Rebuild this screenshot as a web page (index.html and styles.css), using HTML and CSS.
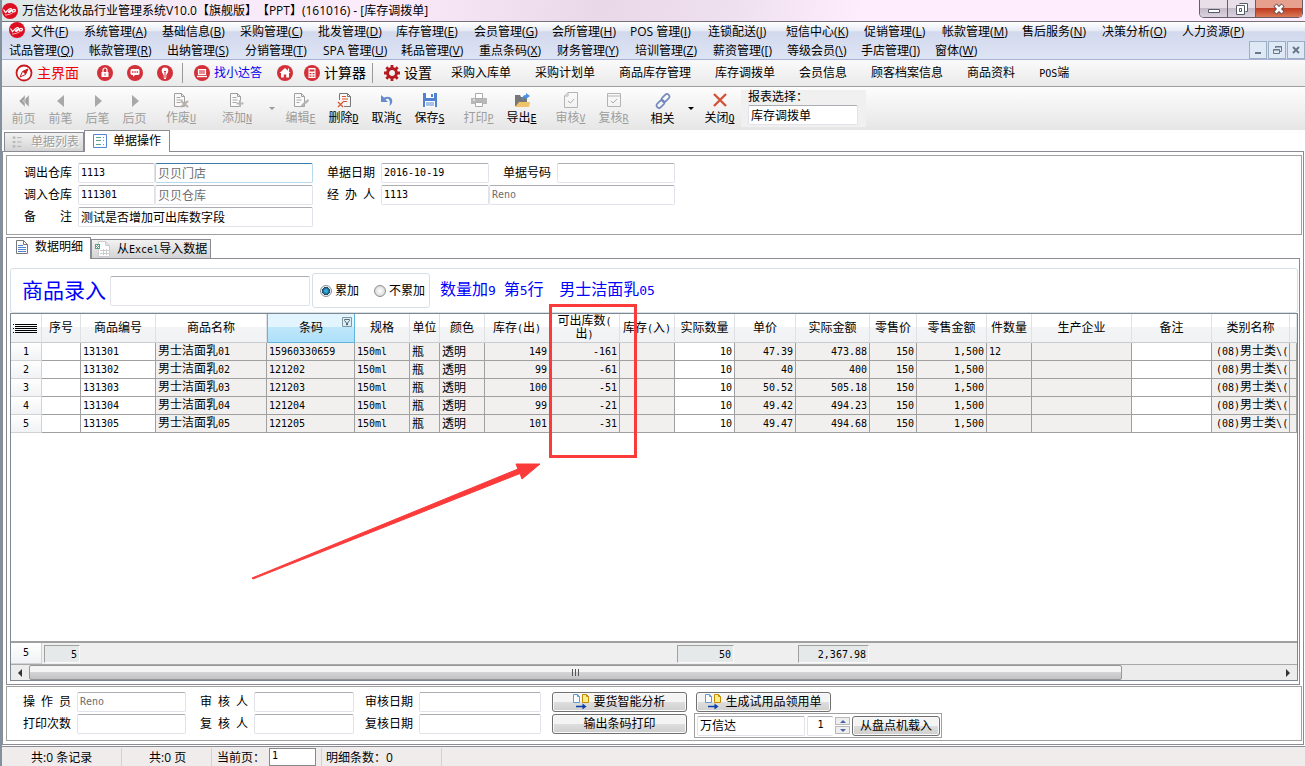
FILE: index.html
```html
<!DOCTYPE html>
<html lang="zh-CN">
<head>
<meta charset="utf-8">
<title>库存调拨单</title>
<link rel="stylesheet" href="styles.css">
</head>
<body>
<svg class="defs" aria-hidden="true">
  <symbol id="logo" viewBox="0 0 16 16"><circle cx="8" cy="8" r="8" fill="#dc1022"/><path d="M1.500 6.500l2 3L7 6.300c2-1.600 3.200-.3 1.800.8S5.500 9.200 7 9.300s3-3 5-3 2 2 .2 2.500-2-.5-1.600-1.500" fill="none" stroke="#fff" stroke-width="1.200"/><path d="M3 12c3 0 6-1 8-2.500" fill="none" stroke="#fff" stroke-width=".7"/></symbol>
  <symbol id="compass" viewBox="0 0 18 18"><circle cx="9" cy="9" r="7.500" fill="#fff" stroke="#c8191e" stroke-width="1.800"/><path d="M13 5l-2.500 5.500L5 13l2.500-5.500z" fill="none" stroke="#c8191e"/><path d="M13 5l-5.500 2.500 3 3z" fill="#c8191e"/></symbol>
  <symbol id="lock" viewBox="0 0 16 16"><circle cx="8" cy="8" r="8" fill="#d3303a"/><path d="M4.500 7h7v5h-7z" fill="#fff"/><path d="M6 7V5a2 2 0 0 1 4 0v2" fill="none" stroke="#fff" stroke-width="1.200"/><path d="M8 8.500v2" stroke="#d3303a"/></symbol>
  <symbol id="chat" viewBox="0 0 16 16"><circle cx="8" cy="8" r="8" fill="#d3303a"/><path d="M4.500 4h7l1 1v4l-1 1H8l-2 2v-2H4.500l-1-1V5z" fill="#fff"/><path d="M5 7h1.500M7.300 7h1.500M9.600 7h1.500" stroke="#d3303a" stroke-width="1.300"/></symbol>
  <symbol id="bulb" viewBox="0 0 16 16"><circle cx="8" cy="8" r="8" fill="#d3303a"/><path d="M8 2.500a3.300 3.300 0 0 1 3.300 3.300C11.300 8 9.700 8.500 9.500 10.500h-3C6.300 8.500 4.700 8 4.700 5.800A3.300 3.300 0 0 1 8 2.500z" fill="#fff"/><path d="M6.500 12h3M7 13.500h2" stroke="#fff"/><path d="M7 6l1 1 1-1M8 7v3" stroke="#d3303a" fill="none"/></symbol>
  <symbol id="laptop" viewBox="0 0 16 16"><circle cx="8" cy="8" r="8" fill="#d3303a"/><path d="M4.500 4.500h7v5h-7z" fill="#e88a8f" stroke="#fff" stroke-width="1.200"/><path d="M3 11.500h10" stroke="#fff" stroke-width="1.400"/></symbol>
  <symbol id="home" viewBox="0 0 16 16"><circle cx="8" cy="8" r="8" fill="#d3303a"/><path d="M8 3l5.500 5H12v4.500H9.200V9.500H6.800v3H4V8H2.500z" fill="#fff"/><path d="M11.500 3.500v3" stroke="#fff" stroke-width="1.200"/></symbol>
  <symbol id="calc" viewBox="0 0 16 16"><circle cx="8" cy="8" r="8" fill="#d3303a"/><path d="M4.500 3h7v10h-7z" fill="#fff"/><path d="M5.500 4.500h5v2h-5zM5.500 8h2v1.300h-2zM8.500 8h2v1.300h-2zM5.500 10.500h2v1.300h-2zM8.500 10.500h2v1.300h-2z" fill="#d3303a"/></symbol>
  <symbol id="gear" viewBox="0 0 16 16"><circle cx="8" cy="8" r="4.500" fill="none" stroke="#b51a20" stroke-width="3"/><path d="M8 0v3M8 13v3M0 8h3M13 8h3M2.300 2.300l2.200 2.200M11.500 11.500l2.200 2.200M13.700 2.300l-2.200 2.200M4.500 11.500l-2.200 2.200" stroke="#b51a20" stroke-width="2.800"/></symbol>
  <symbol id="first" viewBox="0 0 16 16"><path d="M9 2v12L3 8zM13 2v12L7 8z" fill="#a2a2a2" stroke="#e8e8e8" stroke-width=".6"/></symbol>
  <symbol id="prev" viewBox="0 0 16 16"><path d="M11 2v12L4 8z" fill="#a8a8a8"/></symbol>
  <symbol id="next" viewBox="0 0 16 16"><path d="M5 2v12l7-6z" fill="#a8a8a8"/></symbol>
  <symbol id="void" viewBox="0 0 16 16"><path d="M1.500 1.500h7l3 3v10h-10zM8.500 1.500v3h3" fill="#fafafa" stroke="#a0a0a0"/><path d="M3.500 5.500h4M3.500 8h6M3.500 10.500h4" stroke="#a8a8a8"/><path d="M8 9l7 6M15 9l-7 6" stroke="#b8b0ac" stroke-width="2.200"/></symbol>
  <symbol id="add" viewBox="0 0 16 16"><path d="M1.500 1.500h7l3 3v10h-10zM8.500 1.500v3h3" fill="#fafafa" stroke="#a0a0a0"/><path d="M3.500 5.500h4M3.500 8h5M3.500 10.500h4" stroke="#a8a8a8"/><path d="M11 8v7M7.500 11.500h7" stroke="#b8b8b8" stroke-width="2"/></symbol>
  <symbol id="edit" viewBox="0 0 16 16"><path d="M1.500 1.500h7l3 3v10h-10zM8.500 1.500v3h3" fill="#fafafa" stroke="#a0a0a0"/><path d="M3.500 5.500h4M3.500 8h5M3.500 10.500h3" stroke="#a8a8a8"/><path d="M15 7l-6 5-2 3 3.500-1L16 9z" fill="#b4b4b8"/></symbol>
  <symbol id="del" viewBox="0 0 16 16"><path d="M3.500 8V1.500h8l3 3v10H8M11.500 1.500v3h3" fill="none" stroke="#777"/><path d="M6 4.500h4M6 7h6M7 9.500h4" stroke="#d8532f"/><path d="M2 10l5 5M7 10l-5 5" stroke="#d8532f" stroke-width="1.200"/></symbol>
  <symbol id="undo" viewBox="0 0 16 16"><path d="M2 3v7h7L6.500 7.500C9 5.500 12 7.500 10.500 14 16 10 13 2 5 5.500z" fill="#668ccc"/></symbol>
  <symbol id="save" viewBox="0 0 16 16"><path d="M1 1h14v14H1z" fill="#5182cf"/><path d="M4 1h8v5H4zM3 9h10v6H3z" fill="#fff"/><path d="M9 2h2v3H9z" fill="#5182cf"/><path d="M4 11h8M4 13h8" stroke="#5182cf"/></symbol>
  <symbol id="print" viewBox="0 0 16 16"><path d="M0 6h16v6H0z" fill="#b7b7b7"/><path d="M4.500 1.500h7v5h-7zM4.500 10.500h7v4h-7z" fill="#fff" stroke="#aaa"/><path d="M2 8h2" stroke="#fff"/></symbol>
  <symbol id="export" viewBox="0 0 16 16"><path d="M1 3h5l1 2h6v9H1z" fill="#777"/><path d="M5 10h11l-1 5H1z" fill="#eec36a"/><path d="M8 8c0-4 2-5 4-5V1l4 3-4 3V5.500C10 5.500 9 6 8 8z" fill="#4e93e6"/></symbol>
  <symbol id="audit" viewBox="0 0 16 16"><path d="M5 .5h9.500v15h-13V4zM5 .5V4H1.500" fill="none" stroke="#b4b4b4"/><path d="M5 9l2.500 2L11 7" fill="none" stroke="#aaa"/></symbol>
  <symbol id="recheck" viewBox="0 0 16 16"><path d="M1.500 1.500h13v13h-13zM1.500 4h13" fill="none" stroke="#b4b4b4"/><path d="M5 9l2 2 4-4" fill="none" stroke="#aaa"/></symbol>
  <symbol id="link" viewBox="0 0 16 16"><g fill="none" stroke="#7288bd" stroke-width="1.600"><rect x="6" y="2.500" width="9" height="5" rx="2.500" transform="rotate(-45 10.500 5)"/><rect x="1" y="8.500" width="9" height="5" rx="2.500" transform="rotate(-45 5.500 11)"/></g></symbol>
  <symbol id="close" viewBox="0 0 16 16"><path d="M2 2l12 12M14 2L2 14" stroke="#d15439" stroke-width="2.400"/></symbol>
  <symbol id="list" viewBox="0 0 16 16"><path d="M2 3h3M2 8h3M2 13h3" stroke="#b5b5b5" stroke-width="2.500"/><path d="M7 3h5M7 8h5M7 13h5" stroke="#a8a8a8"/></symbol>
  <symbol id="form" viewBox="0 0 14 14"><path d="M.5.500h13v13H.5z" fill="#fff" stroke="#5487d6"/><path d="M3 3.500h5M3 6.500h5M3 10.500h5M10 3.500h1M10 6.500h1M10 10.500h1" stroke="#5aa58b"/></symbol>
  <symbol id="doc" viewBox="0 0 14 14"><path d="M1.500.500h7l4 4v9h-11zM8.500.500v4h4" fill="#fff" stroke="#777"/><path d="M3 5.500h5M3 7.500h8M3 9.500h8M3 11.500h8" stroke="#5182cf"/></symbol>
  <symbol id="excel" viewBox="0 0 16 16"><path d="M3.500.500h7l4 4v11h-11zM10.500.500v4h4" fill="#fff" stroke="#ccc"/><path d="M0 3h5v5H0z" fill="#57a17f"/><path d="M1 4l3 3M4 4L1 7" stroke="#fff"/><path d="M5 9.500h9M5 12.500h9M8.500 8v6M11.500 8v6" stroke="#ccc"/></symbol>
  <symbol id="transfer" viewBox="0 0 16 16"><path d="M.5.500h4l2 2v6h-6zM4.500.500v2h2" fill="#fff" stroke="#609ad0"/><path d="M9.500.500h4l2 2v6h-6zM13.500.500v2h2" fill="#ffee8c" stroke="#c58a00"/><path d="M3 12.500h8" stroke="#0b3fa8" stroke-width="1.500"/><path d="M9.500 9.500l4 3-4 3z" fill="#0b3fa8"/></symbol>
</svg>

<header class="title">
  <svg class="i16"><use href="#logo"/></svg>
  <h1>万信达化妆品行业管理系统V10.0【旗舰版】【PPT】(161016) - [库存调拨单]</h1>
  <div class="wins">
    <button aria-label="最小化"><svg viewBox="0 0 14 12"><path d="M1.500 6.500h11v3h-11z" fill="#fff" stroke="#555a68"/></svg></button>
    <button aria-label="还原"><svg viewBox="0 0 14 12"><path d="M4.500.500h8v8h-2M1.500 2.500h8v9h-8zM4.500 5.500h2v3h-2z" fill="#fff" stroke="#555a68"/></svg></button>
    <button class="x" aria-label="关闭"><svg viewBox="0 0 14 12"><path d="M3 2l8 8M11 2l-8 8" stroke="#5c4a52" stroke-width="4.500"/><path d="M3.500 2.500l7 7M10.500 2.500l-7 7" stroke="#fff" stroke-width="2.600"/></svg></button>
  </div>
</header>

<nav class="menu">
  <div class="mrow top">
    <svg class="i16"><use href="#logo"/></svg>
    <a class="first" href="#">文件(<u>F</u>)</a><a href="#">系统管理(<u>A</u>)</a><a href="#">基础信息(<u>B</u>)</a><a href="#">采购管理(<u>C</u>)</a><a href="#">批发管理(<u>D</u>)</a><a href="#">库存管理(<u>E</u>)</a><a href="#">会员管理(<u>G</u>)</a><a href="#">会所管理(<u>H</u>)</a><a href="#">POS 管理(<u>I</u>)</a><a href="#">连锁配送(<u>J</u>)</a><a href="#">短信中心(<u>K</u>)</a><a href="#">促销管理(<u>L</u>)</a><a class="wide" href="#">帐款管理(<u>M</u>)</a><a class="wide" href="#">售后服务(<u>N</u>)</a><a class="wide" href="#">决策分析(<u>O</u>)</a><a class="wide" href="#">人力资源(<u>P</u>)</a>
  </div>
  <div class="mrow">
    <a class="wide" href="#">试品管理(<u>Q</u>)</a><a href="#">帐款管理(<u>R</u>)</a><a href="#">出纳管理(<u>S</u>)</a><a href="#">分销管理(<u>T</u>)</a><a href="#">SPA 管理(<u>U</u>)</a><a href="#">耗品管理(<u>V</u>)</a><a href="#">重点条码(<u>X</u>)</a><a href="#">财务管理(<u>Y</u>)</a><a href="#">培训管理(<u>Z</u>)</a><a class="slim" href="#">薪资管理(<u>[</u>)</a><a class="slim" href="#">等级会员(<u>\</u>)</a><a class="slim" href="#">手店管理(<u>]</u>)</a><a class="slim" href="#">窗体(<u>W</u>)</a>
    <div class="mdi">
      <button aria-label="最小化窗口"><svg viewBox="0 0 12 12"><path d="M3 9h6" stroke="#66788c" stroke-width="2"/></svg></button>
      <button aria-label="还原窗口"><svg viewBox="0 0 12 12"><path d="M4.500 4V2.500h6v5H9M4 3h7M2.500 5.500h6v4h-6zM2 6h7" fill="none" stroke="#66788c"/></svg></button>
      <button aria-label="关闭窗口"><svg viewBox="0 0 12 12"><path d="M3 3l6 6M9 3l-6 6" stroke="#66788c" stroke-width="2"/></svg></button>
    </div>
  </div>
</nav>

<div class="quick">
  <button class="big red"><svg class="i18"><use href="#compass"/></svg>主界面</button>
  <div class="icons">
    <button aria-label="锁定"><svg class="i16"><use href="#lock"/></svg></button>
    <button aria-label="消息"><svg class="i16"><use href="#chat"/></svg></button>
    <button aria-label="提示"><svg class="i16"><use href="#bulb"/></svg></button>
  </div>
  <i class="bar"></i>
  <button class="blue"><svg class="i16"><use href="#laptop"/></svg>找小达答</button>
  <button class="house" aria-label="主页"><svg class="i16"><use href="#home"/></svg></button>
  <button class="big"><svg class="i16"><use href="#calc"/></svg>计算器</button>
  <i class="bar tight"></i>
  <button class="big set"><svg class="i16"><use href="#gear"/></svg>设置</button>
  <div class="links"><a href="#">采购入库单</a><a href="#">采购计划单</a><a href="#">商品库存管理</a><a href="#">库存调拨单</a><a href="#">会员信息</a><a href="#">顾客档案信息</a><a href="#">商品资料</a><a href="#"><span class="m">POS</span>端</a></div>
</div>

<div class="tools">
  <button class="nav" disabled><svg class="i16"><use href="#first"/></svg>前页</button>
  <button class="nav" disabled><svg class="i16"><use href="#prev"/></svg>前笔</button>
  <button class="nav" disabled><svg class="i16"><use href="#next"/></svg>后笔</button>
  <button class="nav" disabled><svg class="i16"><use href="#next"/></svg>后页</button>
  <button class="roomy" disabled><svg class="i16"><use href="#void"/></svg><span>作废<u class="m">U</u></span></button>
  <button class="roomy" disabled><svg class="i16"><use href="#add"/></svg><span>添加<u class="m">N</u></span></button>
  <i class="caret off"></i>
  <button disabled><svg class="i16"><use href="#edit"/></svg><span>编辑<u class="m">E</u></span></button>
  <button><svg class="i16"><use href="#del"/></svg><span>删除<u class="m">D</u></span></button>
  <button><svg class="i16"><use href="#undo"/></svg><span>取消<u class="m">C</u></span></button>
  <button><svg class="i16"><use href="#save"/></svg><span>保存<u class="m">S</u></span></button>
  <button class="sep" disabled><svg class="i16"><use href="#print"/></svg><span>打印<u class="m">P</u></span></button>
  <button><svg class="i16"><use href="#export"/></svg><span>导出<u class="m">E</u></span></button>
  <button class="sep" disabled><svg class="i16"><use href="#audit"/></svg><span>审核<u class="m">V</u></span></button>
  <button disabled><svg class="i16"><use href="#recheck"/></svg><span>复核<u class="m">R</u></span></button>
  <button class="sep"><svg class="i16"><use href="#link"/></svg>相关</button>
  <i class="caret"></i>
  <button><svg class="i16"><use href="#close"/></svg><span>关闭<u class="m">Q</u></span></button>
  <div class="report"><label for="rep">报表选择：</label><input id="rep" value="库存调拨单"></div>
</div>

<div class="tabs main-tabs">
  <button class="tab dim"><svg class="i14"><use href="#list"/></svg>单据列表</button>
  <button class="tab on"><svg class="i14"><use href="#form"/></svg>单据操作</button>
</div>

<main class="frame">
  <section class="panel form">
    <div class="line">
      <label for="f1">调出仓库</label><input id="f1" class="num w78" value="1113"><input class="hot w158" value="贝贝门店" readonly aria-label="调出仓库名称">
      <label class="l2" for="f2">单据日期</label><input id="f2" class="num w108" value="2016-10-19">
      <label class="l2" for="f3">单据号码</label><input id="f3" class="w118">
    </div>
    <div class="line">
      <label for="f4">调入仓库</label><input id="f4" class="num w78" value="111301"><input class="w158" value="贝贝仓库" readonly aria-label="调入仓库名称">
      <label class="l2" for="f5">经&ensp;办&ensp;人</label><input id="f5" class="num w108" value="1113"><input class="num w186" value="Reno" readonly aria-label="经办人姓名">
    </div>
    <div class="line">
      <label for="f6">备　　注</label><input id="f6" class="w236" value="测试是否增加可出库数字段">
    </div>
  </section>

  <div class="tabs sub-tabs">
    <button class="tab on"><svg class="i14"><use href="#doc"/></svg>数据明细</button>
    <button class="tab"><svg class="i16"><use href="#excel"/></svg><span>从<span class="m">Excel</span>导入数据</span></button>
  </div>

  <section class="page">
    <div class="entry">
      <label class="huge" for="sku">商品录入</label><input id="sku">
      <div class="radios">
        <input type="radio" name="acc" id="r1" checked><label for="r1">累加</label>
        <input type="radio" name="acc" id="r2"><label for="r2">不累加</label>
      </div>
      <p class="msg">数量加<span>9 </span>第<span>5</span>行<span>&nbsp; </span>男士洁面乳<span>05</span></p>
    </div>

    <div class="grid">
      <table>
        <colgroup><col class="c31"><col class="c39"><col class="c75"><col class="c111"><col class="c88"><col class="c55"><col class="c30"><col class="c45"><col class="c65"><col class="c70"><col class="c55"><col class="c60"><col class="c61"><col class="c74"><col class="c47"><col class="c70"><col class="c45"><col class="c100"><col class="c80"><col class="c78"><col></colgroup>
        <thead><tr><th><svg class="rows" viewBox="0 0 26 10"><path d="M2 1.500h22M2 3.500h22M2 5.500h22M2 7.500h22M2 9.500h22M0 1.500h1M0 5.500h1M0 9.500h1" stroke="#000"/></svg></th><th>序号</th><th>商品编号</th><th>商品名称</th><th class="sel">条码<svg class="filter" viewBox="0 0 10 10"><path d="M.5.500h9v9h-9z" fill="#d9f0fb" stroke="#7e98a5"/><path d="M2.500 2.500h5v1L5.500 6v2h-1V6l-2-2.500z" fill="none" stroke="#666"/></svg></th><th>规格</th><th>单位</th><th>颜色</th><th>库存<span class="m">(</span>出<span class="m">)</span></th><th class="two">可出库数<span class="m">(</span><br>出<span class="m">)</span></th><th>库存<span class="m">(</span>入<span class="m">)</span></th><th>实际数量</th><th>单价</th><th>实际金额</th><th>零售价</th><th>零售金额</th><th>件数量</th><th>生产企业</th><th>备注</th><th>类别名称</th><th></th></tr></thead>
        <tbody>
          <tr><th>1</th><td class="w"></td><td class="w m">131301</td><td>男士洁面乳<span class="m">01</span></td><td class="m">15960330659</td><td class="m">150ml</td><td>瓶</td><td>透明</td><td class="n">149</td><td class="n">-161</td><td></td><td class="n w">10</td><td class="n">47.39</td><td class="n">473.88</td><td class="n">150</td><td class="n">1,500</td><td class="m">12</td><td></td><td class="w"></td><td class="cat"><span class="m">(08)</span>男士类<span class="m">\(</span></td><td></td></tr>
          <tr><th>2</th><td class="w"></td><td class="w m">131302</td><td>男士洁面乳<span class="m">02</span></td><td class="m">121202</td><td class="m">150ml</td><td>瓶</td><td>透明</td><td class="n">99</td><td class="n">-61</td><td></td><td class="n w">10</td><td class="n">40</td><td class="n">400</td><td class="n">150</td><td class="n">1,500</td><td></td><td></td><td class="w"></td><td class="cat"><span class="m">(08)</span>男士类<span class="m">\(</span></td><td></td></tr>
          <tr><th>3</th><td class="w"></td><td class="w m">131303</td><td>男士洁面乳<span class="m">03</span></td><td class="m">121203</td><td class="m">150ml</td><td>瓶</td><td>透明</td><td class="n">100</td><td class="n">-51</td><td></td><td class="n w">10</td><td class="n">50.52</td><td class="n">505.18</td><td class="n">150</td><td class="n">1,500</td><td></td><td></td><td class="w"></td><td class="cat"><span class="m">(08)</span>男士类<span class="m">\(</span></td><td></td></tr>
          <tr><th>4</th><td class="w"></td><td class="w m">131304</td><td>男士洁面乳<span class="m">04</span></td><td class="m">121204</td><td class="m">150ml</td><td>瓶</td><td>透明</td><td class="n">99</td><td class="n">-21</td><td></td><td class="n w">10</td><td class="n">49.42</td><td class="n">494.23</td><td class="n">150</td><td class="n">1,500</td><td></td><td></td><td class="w"></td><td class="cat"><span class="m">(08)</span>男士类<span class="m">\(</span></td><td></td></tr>
          <tr><th>5</th><td class="w"></td><td class="w m">131305</td><td>男士洁面乳<span class="m">05</span></td><td class="m">121205</td><td class="m">150ml</td><td>瓶</td><td>透明</td><td class="n">101</td><td class="n">-31</td><td></td><td class="n w">10</td><td class="n">49.47</td><td class="n">494.68</td><td class="n">150</td><td class="n">1,500</td><td></td><td></td><td class="w"></td><td class="cat"><span class="m">(08)</span>男士类<span class="m">\(</span></td><td></td></tr>
        </tbody>
      </table>
      <div class="blank"></div>
      <table class="sum">
        <colgroup><col class="c31"><col class="c39"><col class="c594"><col class="c60"><col class="c61"><col class="c74"><col></colgroup>
        <tbody><tr><th>5</th><td><div class="box">5</div></td><td></td><td><div class="box">50</div></td><td></td><td><div class="box">2,367.98</div></td><td></td></tr></tbody>
      </table>
      <div class="scroll"><button class="left" aria-label="向左滚动"></button><div class="track"><div class="thumb"><i></i><i></i><i></i></div></div><button class="right" aria-label="向右滚动"></button></div>
    </div>
  </section>

  <section class="panel foot">
    <div class="fields">
      <label for="g1">操&ensp;作&ensp;员</label><input id="g1" class="num" value="Reno" readonly>
      <label for="g2">审&ensp;核&ensp;人</label><input id="g2">
      <label for="g3">审核日期</label><input id="g3">
      <label for="g4">打印次数</label><input id="g4">
      <label for="g5">复&ensp;核&ensp;人</label><input id="g5">
      <label for="g6">复核日期</label><input id="g6">
    </div>
    <div class="acts">
      <button class="btn"><svg class="i16"><use href="#transfer"/></svg>要货智能分析</button>
      <button class="btn">输出条码打印</button>
    </div>
    <div class="acts">
      <button class="btn gen"><svg class="i16"><use href="#transfer"/></svg>生成试用品领用单</button>
      <div class="load"><input class="dev" value="万信达" aria-label="盘点机"><input class="num qty" value="1" aria-label="编号"><span class="spin"><button aria-label="增加"><i class="up"></i></button><button aria-label="减少"><i class="down"></i></button></span><button class="btn">从盘点机载入</button></div>
    </div>
  </section>
</main>

<footer class="status">
  <span class="s1">共:0 条记录</span><span class="s2">共:0 页</span><span class="s3"><label for="pg">当前页：</label><input id="pg" class="num" value="1"></span><span class="s4">明细条数：0</span>
</footer>

<svg class="note" viewBox="0 0 400 290" aria-hidden="true">
  <path d="M301.500 2.500h85v151h-85z" fill="none" stroke="#fb3a3a" stroke-width="3"/>
  <path d="M3 275L269 166l-2-5 24 0-18 15-2-5.500L4 276z" fill="#fb3a3a" stroke="#fb3a3a"/>
</svg>
</body>
</html>
```

FILE: styles.css
```css
* { box-sizing: border-box; }

body {
  margin: 0;
  min-height: 100vh;
  display: flex;
  flex-direction: column;
  position: relative;
  overflow: hidden;
  border-left: 2px solid #82919d;
  background: #fff;
  color: #000;
  font: 12px/16px "Liberation Sans", "Noto Sans CJK SC", sans-serif;
}

button, input { font: inherit; color: inherit; margin: 0; padding: 0; }
button { background: none; border: 0; white-space: nowrap; }
a { color: inherit; text-decoration: none; white-space: nowrap; }
svg { display: block; flex: none; }

.defs { position: absolute; width: 0; height: 0; }
.i14 { width: 14px; height: 14px; }
.i16 { width: 16px; height: 16px; }
.i18 { width: 18px; height: 18px; }
.m { font-family: "DejaVu Sans Mono", monospace; font-size: 10px; }

input {
  height: 20px;
  border: 1px solid #e2e3ea;
  border-top-color: #abadb3;
  border-radius: 2px;
  background: #fff;
  padding: 0 2px 2px;
  min-width: 0;
}
input[readonly] { color: #6d6d6d; }
input.num { font-family: "DejaVu Sans Mono", monospace; font-size: 10px; }
input.hot { border-color: #3d7bad #b7d9ed #b7d9ed; }

.title {
  display: flex;
  align-items: center;
  gap: 4px;
  height: 22px;
  border-bottom: 1px solid #777078;
  background: linear-gradient(100deg, #dbe7e6 0, #f6e9f6 12%, #fbebfb 28%, #e8d8e8 46%, #efe0ef 56%, #fdedfd 66%);
}
.title h1 {
  margin: 0;
  font: 12px/20px "Open Sans", "Noto Sans CJK SC", sans-serif;
  text-spacing-trim: space-all;
  white-space: nowrap;
}
.wins { display: flex; align-self: flex-start; margin-left: auto; margin-right: 2px; border: 1px solid #655e68; border-top: 0; border-radius: 0 0 5px 5px; overflow: hidden; }
.wins button { width: 28px; height: 17px; display: grid; place-items: center; border-right: 1px solid #655e68; background: linear-gradient(#e9dfe9 50%, #c4bac8 50%, #ddd2df); }
.wins button.x { width: 46px; border: 0; background: linear-gradient(#e7a08d 50%, #c03a20 50%, #da7854); }
.wins svg { width: 14px; height: 12px; }

.menu {
  height: 38px;
  border-bottom: 1px solid #aab2d3;
  background: linear-gradient(#fff, #e4e9f4 25%, #d3d9ed 26%, #dde4f4);
  font-family: "Open Sans", "Noto Sans CJK SC", sans-serif;
}
.mrow { display: flex; height: 19px; padding-left: 7px; line-height: 20px; }
.mrow .i16 { margin-right: 6px; }
.mrow a { width: 78px; }
.mrow a.first { width: 53px; }
.mrow a.wide { width: 80px; }
.mrow a.slim { width: 74px; }
.mdi { display: flex; gap: 1px; margin-left: auto; }
.mdi button { width: 18px; height: 18px; display: grid; place-items: center; border: 1px solid #9aaec4; background: #dfe9f6; }
.mdi svg { width: 12px; height: 12px; }

.quick {
  display: flex;
  align-items: center;
  height: 27px;
  padding-left: 13px;
  border-bottom: 1px solid #a0a0a0;
  background: linear-gradient(#fafafa, #eaeaea);
}
.quick button { display: flex; align-items: center; gap: 4px; }
.quick .big { font-size: 14px; }
.quick .red { color: #f00000; }
.quick .blue { color: #0000f0; }
.icons { display: flex; gap: 14px; margin-left: 18px; }
.bar { width: 1px; height: 20px; margin: 0 11px 0 9px; background: #9a9a9a; }
.bar.tight { margin: 0 11px 0 6px; }
.house { margin: 0 11px 0 15px; }
.links { display: flex; gap: 24px; margin-left: 19px; }

.tools {
  display: flex;
  align-items: center;
  height: 43px;
  padding-left: 3px;
  background: linear-gradient(#fdfdfd, #e6e6e6);
}
.tools button { width: 43px; display: flex; flex-direction: column; align-items: center; gap: 2px; padding-top: 2px; }
.tools button:disabled { color: #9d9d9d; }
.tools .nav { width: 37px; }
.tools .roomy { width: 56px; }
.tools .sep { margin-left: 6px; }
.caret { border: 3px solid transparent; border-top-color: #000; margin: 3px 4px 0; }
.caret.off { border-top-color: #999; }
.report { display: flex; flex-direction: column; width: 125px; height: 37px; padding-left: 7px; background: #f0f0f0; line-height: 15px; }
.report input { width: 110px; }

.tabs { display: flex; align-items: flex-end; }
.tab { display: flex; align-items: center; gap: 6px; height: 19px; padding: 0 4px 0 6px; border: 1px solid #8b8b93; border-bottom: 0; background: linear-gradient(#f2f2f2, #d4d4d4); }
.tab.on { height: 22px; margin-bottom: -1px; padding: 0 8px; background: #fff; z-index: 1; }
.tab.dim { color: #9d9d9d; text-shadow: 1px 1px #fff; }
.main-tabs { height: 21px; padding-left: 2px; }
.main-tabs .tab.on { padding-bottom: 2px; }
.sub-tabs { height: 22px; margin-top: 1px; }
.sub-tabs .tab { padding: 0 3px; }
.sub-tabs .tab.on { padding: 0 7px 3px 8px; }

.frame { flex: 1; display: flex; flex-direction: column; margin-right: 1px; padding: 3px 1px 3px 3px; border: 1px solid #8b8b93; }
.panel { border: 1px solid #a0a0a0; }
.form { display: flex; flex-direction: column; gap: 2px; padding: 7px 17px; height: 80px; }
.line { display: flex; }
.line label { width: 54px; line-height: 20px; white-space: nowrap; }
.line .l2 { margin-left: 14px; }
.w78 { width: 77px; }
.w108 { width: 108px; }
.w118 { width: 118px; }
.w158 { width: 158px; }
.w186 { width: 186px; }
.w236 { width: 235px; }

.page { flex: 1; display: flex; flex-direction: column; margin-right: 2px; padding: 9px 1px 3px 3px; border: 1px solid #8b8b93; }
.entry { display: flex; align-items: center; height: 45px; padding-left: 11px; border: 1px solid #d5dfe5; border-radius: 3px; }
.entry .huge { width: 88px; font-size: 21px; line-height: 28px; color: #0000ff; white-space: nowrap; }
.entry > input { width: 200px; height: 30px; }
.radios { display: flex; align-items: center; height: 35px; margin-left: 2px; padding: 0 3px 0 7px; border: 1px solid #d5dfe5; border-radius: 3px; line-height: 20px; }
.radios input { appearance: none; width: 12px; height: 12px; margin-right: 3px; padding: 0; border: 1px solid #8e8f8f; border-radius: 50%; background: radial-gradient(#fff, #ccc); }
.radios input:checked { background: radial-gradient(#35b0e6 0 1px, #16425f 4px, #eee 4px); }
.radios label { margin-right: 15px; }
.radios label:last-child { margin-right: 1px; }
.msg { margin: 0 0 0 10px; font-size: 16px; line-height: 20px; color: #0000ff; white-space: pre; }
.msg span { font-family: "DejaVu Sans Mono", monospace; font-size: 13px; }

.grid { flex: 1; display: flex; flex-direction: column; border: 1px solid #7f8791; }
table { width: 100%; table-layout: fixed; border-spacing: 0; }
th { padding: 0; font-weight: normal; }
thead th { height: 29px; position: relative; line-height: 12px; border-right: 1px solid #dfe1e5; border-bottom: 1px solid #c9cbcf; background: linear-gradient(#fff 45%, #f3f4f6 46%, #f1f2f4); white-space: nowrap; }
thead th.sel { border: 1px solid #5fb5dc; border-top: 0; background: linear-gradient(#e2f4fd 45%, #bfe7fb 46%, #aee0fa); }
.filter { position: absolute; top: 3px; right: 2px; width: 10px; height: 10px; }
.rows { width: 26px; height: 10px; margin: 0 auto; }
tbody th { font-family: "DejaVu Sans Mono", monospace; font-size: 10px; border-right: 1px solid #d0d2d6; border-bottom: 1px solid #d0d2d6; background: linear-gradient(#fff, #f1f2f4); }
tbody td { height: 18px; padding: 0 2px; overflow: hidden; line-height: 16px; white-space: nowrap; border-right: 1px solid #a0a0a0; border-bottom: 1px solid #a0a0a0; background: #f2f0ef; }
tbody td.w { background: #fff; }
tbody td.cat { padding: 0 0 0 4px; }
tbody td.n { text-align: right; font-family: "DejaVu Sans Mono", monospace; font-size: 10px; }
.c30 { width: 30px; }
.c31 { width: 31px; }
.c39 { width: 39px; }
.c45 { width: 45px; }
.c47 { width: 47px; }
.c55 { width: 55px; }
.c60 { width: 60px; }
.c61 { width: 61px; }
.c65 { width: 65px; }
.c70 { width: 70px; }
.c74 { width: 74px; }
.c75 { width: 75px; }
.c78 { width: 78px; }
.c80 { width: 80px; }
.c88 { width: 88px; }
.c100 { width: 100px; }
.c111 { width: 111px; }
.c594 { width: 594px; }
.blank { flex: 1; }

.sum { border-top: 2px solid #a0a0a0; background: #efefef; }
.sum td { height: 21px; border: 0; padding: 0 1px 0 2px; background: #efefef; }
.sum .box { height: 18px; padding-right: 2px; border: 1px solid #fafafa; border-top-color: #a0a0a0; border-left-color: #a0a0a0; background: #e5e9ea; text-align: right; font: 10px/17px "DejaVu Sans Mono", monospace; }
.scroll { display: flex; height: 16px; border-top: 1px solid #a8a8a8; background: #ececec; }
.scroll > button { width: 18px; display: grid; place-items: center; }
.scroll > button::before { content: ""; border: 4px solid transparent; }
.scroll > .left::before { border-right-color: #333; border-left-width: 0; }
.scroll > .right::before { border-left-color: #333; border-right-width: 0; }
.track { flex: 1; }
.thumb { width: 87.4%; height: 15px; display: flex; justify-content: center; align-items: center; gap: 2px; border: 1px solid #979797; border-radius: 2px; background: linear-gradient(#f4f4f4 45%, #d4d4d6 50%, #c2c2c5); }
.thumb i { width: 1px; height: 7px; background: #555; }

.foot { display: flex; margin-top: 1px; height: 55px; padding: 5px 0 0 16px; }
.fields { display: grid; grid-template-columns: 54px 109px 68px 100px 65px 122px; gap: 2px 0; align-content: start; }
.fields label { justify-self: end; padding-right: 6px; line-height: 20px; white-space: nowrap; }
.acts { display: flex; flex-direction: column; gap: 2px; width: 135px; margin-left: 11px; }
.acts + .acts { width: auto; margin-left: 7px; gap: 0; }
.btn { display: flex; align-items: center; justify-content: center; gap: 4px; height: 20px; border: 1px solid #707070; border-radius: 3px; background: linear-gradient(#f4f4f4 50%, #dedede 50%, #cfcfcf); box-shadow: inset 0 0 0 1px #fafafa; }
.gen { width: 135px; margin-left: 2px; }
.load { display: flex; align-items: center; gap: 2px; height: 25px; margin-top: 1px; padding: 1px 1px 1px 2px; border: 1px solid #a0a0a0; }
.load .dev { width: 108px; }
.load .qty { width: 26px; text-align: center; border-right: 0; }
.load .btn { width: 88px; }
.spin { display: flex; flex-direction: column; gap: 1px; }
.spin button { width: 15px; height: 8px; display: grid; place-items: center; border: 1px solid #b9b9b9; background: #eee; }
.up { border: 3px solid transparent; border-top: 0; border-bottom-color: #4a63ad; }
.down { border: 3px solid transparent; border-bottom: 0; border-top-color: #4a63ad; }

.status { display: flex; height: 20px; margin-top: 1px; padding-top: 1px; border-top: 1px solid #8b8b93; background: #f0eceb; font-family: "Open Sans", "Noto Sans CJK SC", sans-serif; line-height: 20px; white-space: nowrap; }
.status > span { border-right: 1px solid #d5d1d0; }
.s1 { width: 120px; padding-left: 29px; }
.s2 { width: 90px; padding-left: 27px; }
.s3 { width: 110px; padding: 0 5px; display: flex; }
.s3 label { width: 52px; }
.s3 input { width: 47px; height: 18px; border: 1px solid #888; border-radius: 0; }
.s4 { width: 120px; padding-left: 4px; }

.note { position: absolute; left: 247px; top: 303px; width: 400px; height: 290px; pointer-events: none; }
```
